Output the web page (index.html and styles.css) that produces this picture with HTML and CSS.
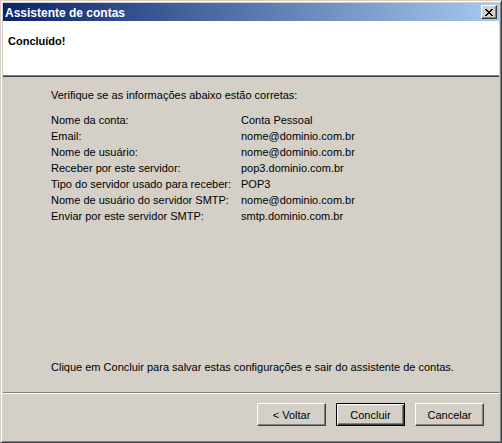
FILE: index.html
```html
<!DOCTYPE html>
<html lang="pt-BR">
<head>
<meta charset="utf-8">
<title>Assistente de contas</title>
<link rel="stylesheet" href="styles.css">
</head>
<body>
<div class="window">
  <div class="titlebar">
    <span class="title">Assistente de contas</span>
    <button class="close" type="button" aria-label="Fechar">
      <svg width="8" height="7" viewBox="0 0 8 7" shape-rendering="crispEdges">
        <path d="M0 0h2v1h-2zM6 0h2v1h-2zM1 1h2v1h-2zM5 1h2v1h-2zM2 2h4v1h-4zM3 3h2v1h-2zM2 4h4v1h-4zM1 5h2v1h-2zM5 5h2v1h-2zM0 6h2v1h-2zM6 6h2v1h-2z" fill="#000"/>
      </svg>
    </button>
  </div>
  <div class="header">Concluído!</div>
  <div class="content">
    <p class="intro">Verifique se as informações abaixo estão corretas:</p>
    <dl class="summary">
      <dt>Nome da conta:</dt><dd>Conta Pessoal</dd>
      <dt>Email:</dt><dd>nome@dominio.com.br</dd>
      <dt>Nome de usuário:</dt><dd>nome@dominio.com.br</dd>
      <dt>Receber por este servidor:</dt><dd>pop3.dominio.com.br</dd>
      <dt>Tipo do servidor usado para receber:</dt><dd>POP3</dd>
      <dt>Nome de usuário do servidor SMTP:</dt><dd>nome@dominio.com.br</dd>
      <dt>Enviar por este servidor SMTP:</dt><dd>smtp.dominio.com.br</dd>
    </dl>
    <p class="final">Clique em Concluir para salvar estas configurações e sair do assistente de contas.</p>
  </div>
  <div class="footer">
    <button class="btn" type="button">&lt; Voltar</button>
    <button class="btn btn-default" type="button">Concluir</button>
    <button class="btn" type="button">Cancelar</button>
  </div>
</div>
</body>
</html>
```

FILE: styles.css
```css
* {
  box-sizing: border-box;
}

html, body {
  margin: 0;
  padding: 0;
  background: #d4d0c8;
}

body {
  font-family: "Liberation Sans", Arial, sans-serif;
  font-size: 11px;
  color: #000;
}

.window {
  width: 502px;
  height: 443px;
  display: flex;
  flex-direction: column;
  background: #d4d0c8;
  border: 1px solid;
  border-color: #d4d0c8 #404040 #404040 #d4d0c8;
  padding: 2px;
  box-shadow: inset 1px 1px #fff, inset -1px -1px #808080;
}

.titlebar {
  height: 18px;
  flex: none;
  display: flex;
  align-items: center;
  justify-content: space-between;
  padding: 0 2px 0 2px;
  background: linear-gradient(to right, #0a246a, #a6caf0);
}

.title {
  color: #fff;
  font-weight: bold;
  font-size: 12px;
  line-height: 14px;
  padding-top: 1px;
}

.close {
  width: 16px;
  height: 14px;
  padding: 0;
  margin: 0;
  display: flex;
  align-items: center;
  justify-content: center;
  background: #d4d0c8;
  border: 1px solid;
  border-color: #fff #404040 #404040 #fff;
  box-shadow: inset -1px -1px #808080;
}

.header {
  height: 55px;
  flex: none;
  background: #fff;
  font-weight: bold;
  line-height: 13px;
  padding: 14px 0 0 5px;
  border-bottom: 1px solid #808080;
  box-shadow: 0 1px #404040;
  margin-bottom: 1px;
}

.content {
  flex: 1;
  display: flex;
  flex-direction: column;
  padding: 12px 10px 18px 48px;
  line-height: 13px;
}

.intro,
.final {
  margin: 0;
}

.summary {
  margin: 10px 0 0 0;
  display: grid;
  grid-template-columns: 190px auto;
  grid-auto-rows: 16px;
  line-height: 16px;
}

.summary dt,
.summary dd {
  margin: 0;
  white-space: nowrap;
}

.final {
  margin-top: auto;
}

.footer {
  height: 48px;
  flex: none;
  display: flex;
  justify-content: flex-end;
  align-items: flex-start;
  padding: 10px 15px 0 0;
  border-top: 1px solid #808080;
  box-shadow: inset 0 1px #fff;
}

.btn {
  width: 69px;
  height: 23px;
  margin: 0 0 0 10px;
  padding: 0;
  font-family: inherit;
  font-size: 11px;
  color: #000;
  background: #d4d0c8;
  border: 1px solid;
  border-color: #fff #404040 #404040 #fff;
  box-shadow: inset -1px -1px #808080, inset 1px 1px #d4d0c8;
}

.btn-default {
  border: 1px solid #000;
  box-shadow: inset 1px 1px #fff, inset -1px -1px #404040, inset -2px -2px #808080;
}
```
